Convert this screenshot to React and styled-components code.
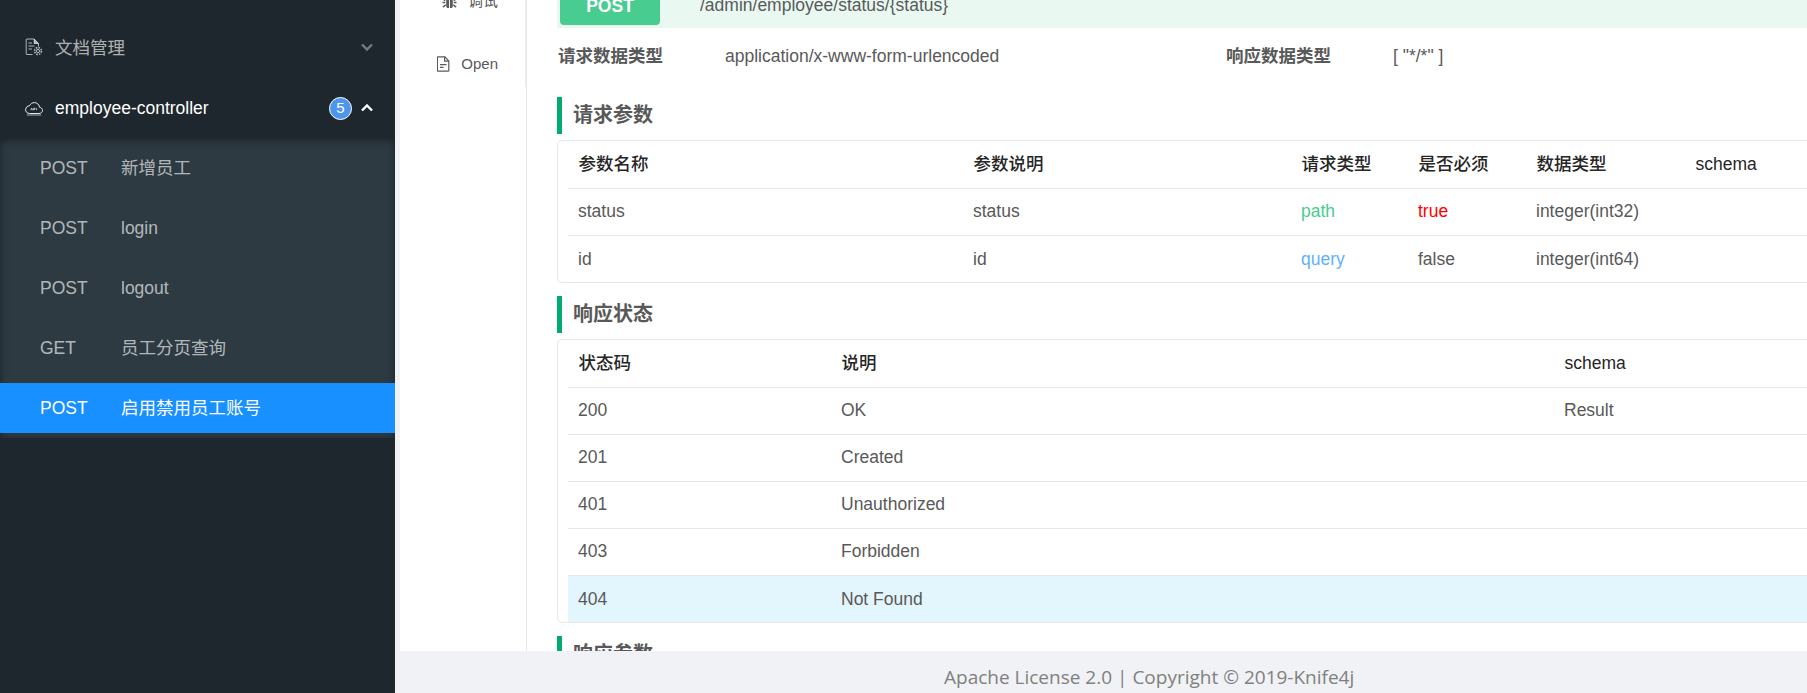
import React from 'react';
import styled, { createGlobalStyle } from 'styled-components';

const Global = createGlobalStyle`
  html, body { margin: 0; padding: 0; height: 100%; overflow: hidden; }
  body { font-family: "Liberation Sans", "Noto Sans CJK SC", Arial, sans-serif; font-size: 17.5px; line-height: 1.5; color: #595959; }
  * { box-sizing: border-box; }
`;

const Shell = styled.div`
  display: flex;
  width: 1807px;
  height: 693px;
  overflow: hidden;
  background: #f0f2f5;
`;

const Sidebar = styled.aside`
  flex: 0 0 395px;
  background: #1f272e;
  padding-top: 22px;
`;

const MenuHead = styled.div`
  display: flex;
  align-items: center;
  height: 50px;
  margin-bottom: ${p => p.$mb || 0}px;
  padding: 0 22px 0 25px;
  color: ${p => (p.$open ? '#fff' : 'rgba(255,255,255,.65)')};
`;

const MenuIcon = styled.svg`
  flex: none;
  width: 18px;
  height: 18px;
  margin-right: 12px;
  fill: none;
  stroke: currentColor;
`;

const MenuTitle = styled.span`
  flex: 1;
  padding-top: ${p => p.$nudge || 0}px;
`;

const Badge = styled.span`
  display: flex;
  align-items: center;
  justify-content: center;
  width: 23px;
  height: 23px;
  margin-right: 9px;
  border: 1.5px solid #fff;
  border-radius: 50%;
  background: #4d97ea;
  color: #fff;
  font-size: 15px;
`;

const Chevron = styled.svg`
  width: 12px;
  height: 8px;
  fill: none;
  stroke: currentColor;
  stroke-width: 2.4;
  opacity: ${p => (p.$dim ? 0.6 : 1)};
`;

const SubMenu = styled.div`
  height: 300px;
  margin-top: 5px;
  padding-top: 5px;
  background: #2d3a42;
  box-shadow: inset 0 2px 8px rgba(0, 0, 0, 0.45);
`;

const SubItem = styled.div`
  display: flex;
  align-items: center;
  height: 50px;
  margin-bottom: 10px;
  padding-left: 40px;
  background: ${p => (p.$active ? '#1890ff' : 'transparent')};
  color: ${p => (p.$active ? '#fff' : 'rgba(255,255,255,.65)')};
`;

const Method = styled.span`
  flex: 0 0 81px;
`;

const Main = styled.main`
  flex: 1;
  min-width: 0;
  display: flex;
  flex-direction: column;
  padding-left: 5px;
`;

const Body = styled.div`
  flex: none;
  height: 651px;
  display: flex;
  overflow: hidden;
  background: #fff;
`;

const TabRail = styled.nav`
  flex: 0 0 127px;
  border-right: 1px solid #e8e8e8;
  margin-top: -24px;
`;

const TabList = styled.div`
  height: 111px;
  display: flex;
  flex-direction: column;
  align-items: flex-end;
  padding-right: 27px;
  border-right: 1px solid #ebebeb;
  font-size: 15px;
`;

const Tab = styled.div`
  display: flex;
  align-items: center;
  flex: none;
  height: 50px;
  margin-bottom: 13px;
  gap: 11px;
`;

const TabIcon = styled.svg`
  width: ${p => p.$w || 14}px;
  height: ${p => p.$h || 16}px;
`;

const Content = styled.section`
  flex: none;
  width: 1400px;
  margin-top: -22px;
  padding-left: 30px;
`;

const Band = styled.div`
  display: flex;
  align-items: center;
  height: 50px;
  padding: 0 3px;
  background: #e9f9f2;
`;

const VerbButton = styled.div`
  display: flex;
  align-items: center;
  justify-content: center;
  width: 100px;
  height: 38px;
  margin-top: 6px;
  border-radius: 4px;
  background: #49cc90;
  color: #fff;
  font-weight: 700;
  font-size: 17.5px;
`;

const ApiPath = styled.span`
  margin-left: 40px;
  margin-top: 5px;
`;

const MetaRow = styled.div`
  display: flex;
  align-items: center;
  height: 56px;
`;

const MetaLabel = styled.span`
  flex: 0 0 ${p => p.$w}px;
  padding-left: 1px;
  font-weight: 700;
  color: #595959;
`;

const MetaValue = styled.span`
  flex: 0 0 ${p => (p.$w ? `${p.$w}px` : 'auto')};
`;

const SectionTitle = styled.h3`
  display: flex;
  align-items: center;
  height: 37px;
  margin: ${p => p.$mt}px 0 6px;
  padding: 0 0 2px 11px;
  border-left: 5px solid #00ab6d;
  font-size: 20px;
  font-weight: 700;
  color: #595959;
`;

const TableCard = styled.div`
  padding: 0 0 0 10px;
  border: 1px solid #e8e8e8;
  border-radius: 5px;
`;

const Table = styled.table`
  width: 100%;
  table-layout: fixed;
  border-collapse: collapse;
`;

const Th = styled.th`
  height: 47px;
  padding: 0 0 0 10.5px;
  text-align: left;
  font-weight: 500;
  color: #262626;
  border-bottom: 1px solid #e8e8e8;
`;

const Td = styled.td`
  height: ${p => p.$h || 47}px;
  padding: 0 0 0 10px;
  color: ${p => p.$color || '#595959'};
  border-bottom: 1px solid #e8e8e8;
  tr:last-child > & { border-bottom: none; }
`;

const Tr = styled.tr`
  background: ${p => (p.$hl ? '#e3f5fd' : 'transparent')};
`;

const Footer = styled.footer`
  flex: 1;
  display: flex;
  align-items: center;
  padding: 10px 0 0 544px;
  color: #808080;
  font-family: "Open Sans", sans-serif;
  font-size: 19px;
`;

const DocGearIcon = () => (
  <MenuIcon viewBox="0 0 18 18" strokeWidth="1">
    <path d="M7.5 16.5H2a.8.8 0 0 1-.8-.8V1.8A.8.8 0 0 1 2 1h7.2l4.3 4.5v3" />
    <path d="M9.2 1v4.5h4.3" fill="currentColor" />
    <path d="M3.5 5h3.5M3.5 8h6M3.5 11h3.5" />
    <circle cx="13" cy="13" r="1.6" />
    <circle cx="13" cy="13" r="3.4" strokeWidth="1.6" strokeDasharray="1.6 1.07" />
  </MenuIcon>
);

const CloudApiIcon = () => (
  <MenuIcon viewBox="0 0 18 18" strokeWidth="0.9">
    <path d="M4.5 14.5h9.6c1.9 0 3.4-1.4 3.4-3.1 0-1.6-1.3-2.9-2.9-3.1C14.2 5.4 12 3.6 9.4 3.6c-2.1 0-3.9 1.2-4.7 3C2.4 6.8.6 8.6.6 10.8c0 2 1.7 3.7 3.9 3.7z" />
    <path d="M1.8 16h14.4" opacity=".7" />
    <path d="M5.8 11.2l.9-2 .9 2M8.7 11.2V9.2h.9a.6.6 0 0 1 0 1.2h-.9M11.6 9.2v2" strokeWidth=".7" />
  </MenuIcon>
);

const ChevronDown = () => (
  <Chevron $dim viewBox="0 0 12 8"><path d="M1 1.5l5 5 5-5" /></Chevron>
);
const ChevronUp = () => (
  <Chevron viewBox="0 0 12 8"><path d="M1 6.5l5-5 5 5" /></Chevron>
);

const BugIcon = () => (
  <TabIcon $w={15} $h={15} viewBox="0 0 15 16" fill="#595959">
    <path d="M4 3h7v10c0 1-1 2-2 2H6c-1 0-2-1-2-2z" />
    <path d="M0 5l3 2M15 5l-3 2M0 9h3M15 9h-3M.5 14l3-2.5M14.5 14l-3-2.5" stroke="#595959" strokeWidth="1.6" fill="none" />
    <path d="M7.5 3v12" stroke="#fff" strokeWidth="1" />
  </TabIcon>
);

const FileIcon = () => (
  <TabIcon $w={13} $h={16} viewBox="0 0 13 16" fill="none" stroke="#595959" strokeWidth="1.2">
    <path d="M1.2.8h6.6l4 4.2v9.4a.8.8 0 0 1-.8.8H1.2a.8.8 0 0 1-.8-.8V1.6a.8.8 0 0 1 .8-.8z" />
    <path d="M7.6.8v4.4h4.2" />
    <path d="M3 8.6h6.5M3 11.4h3.6" />
  </TabIcon>
);

const subItems = [
  ['POST', '新增员工'],
  ['POST', 'login'],
  ['POST', 'logout'],
  ['GET', '员工分页查询'],
  ['POST', '启用禁用员工账号', true],
];

const paramCols = [395, 328, 117, 118, 159, 283];
const statusCols = [263, 723, 414];
const paramHead = ['参数名称', '参数说明', '请求类型', '是否必须', '数据类型', 'schema'];
const paramRows = [
  [['status'], ['status'], ['path', '#49cc90'], ['true', '#ff0000'], ['integer(int32)'], ['']],
  [['id'], ['id'], ['query', '#61affe'], ['false'], ['integer(int64)'], ['']],
];
const statusHead = ['状态码', '说明', 'schema'];
const statusRows = [
  ['200', 'OK', 'Result'],
  ['201', 'Created', ''],
  ['401', 'Unauthorized', ''],
  ['403', 'Forbidden', ''],
  ['404', 'Not Found', ''],
];

const Cols = ({ widths }) => (
  <colgroup>{widths.map((w, i) => <col key={i} width={w} />)}</colgroup>
);

export default function App() {
  return (
    <>
      <Global />
      <Shell>
        <Sidebar>
          <MenuHead $mb={11}>
            <DocGearIcon />
            <MenuTitle $nudge={2}>文档管理</MenuTitle>
            <ChevronDown />
          </MenuHead>
          <MenuHead $open>
            <CloudApiIcon />
            <MenuTitle>employee-controller</MenuTitle>
            <Badge>5</Badge>
            <ChevronUp />
          </MenuHead>
          <SubMenu>
            {subItems.map(([m, t, a]) => (
              <SubItem key={t} $active={a}>
                <Method>{m}</Method>
                <span>{t}</span>
              </SubItem>
            ))}
          </SubMenu>
        </Sidebar>
        <Main>
          <Body>
            <TabRail>
              <TabList>
                <Tab><BugIcon /><span>调试</span></Tab>
                <Tab><FileIcon /><span>Open</span></Tab>
              </TabList>
            </TabRail>
            <Content>
              <Band>
                <VerbButton>POST</VerbButton>
                <ApiPath>/admin/employee/status/{'{status}'}</ApiPath>
              </Band>
              <MetaRow>
                <MetaLabel $w={168}>请求数据类型</MetaLabel>
                <MetaValue $w={500}>application/x-www-form-urlencoded</MetaValue>
                <MetaLabel $w={168}>响应数据类型</MetaLabel>
                <MetaValue>[ "*/*" ]</MetaValue>
              </MetaRow>
              <SectionTitle $mt={13}>请求参数</SectionTitle>
              <TableCard>
                <Table>
                  <Cols widths={paramCols} />
                  <thead>
                    <tr>{paramHead.map(h => <Th key={h}>{h}</Th>)}</tr>
                  </thead>
                  <tbody>
                    {paramRows.map((row, i) => (
                      <tr key={i}>
                        {row.map(([v, c], j) => <Td key={j} $color={c}>{v}</Td>)}
                      </tr>
                    ))}
                  </tbody>
                </Table>
              </TableCard>
              <SectionTitle $mt={13}>响应状态</SectionTitle>
              <TableCard>
                <Table>
                  <Cols widths={statusCols} />
                  <thead>
                    <tr>{statusHead.map(h => <Th key={h}>{h}</Th>)}</tr>
                  </thead>
                  <tbody>
                    {statusRows.map((row, i) => (
                      <Tr key={row[0]} $hl={i === 4}>
                        {row.map((v, j) => <Td key={j}>{v}</Td>)}
                      </Tr>
                    ))}
                  </tbody>
                </Table>
              </TableCard>
              <SectionTitle $mt={13}>响应参数</SectionTitle>
            </Content>
          </Body>
          <Footer>Apache License 2.0 | Copyright © 2019-Knife4j</Footer>
        </Main>
      </Shell>
    </>
  );
}
